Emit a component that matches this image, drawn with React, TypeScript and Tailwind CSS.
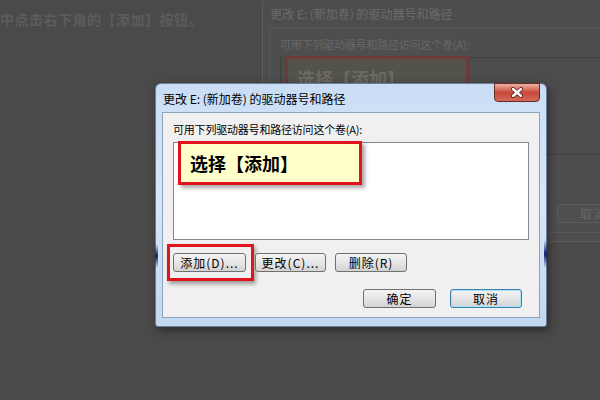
import React from "react";

type Tone = { dim?: boolean };

const Btn = ({ label, w, focus, dim }: { label: string; w: string; focus?: boolean } & Tone) => (
  <button
    className={`${w} h-[19px] shrink-0 rounded-[3px] border text-[12px] leading-none tracking-[1px] flex items-center justify-center ${
      dim
        ? "border-[#5c5c5c] bg-[#4f4f4f] text-[#676767]"
        : focus
        ? "border-[#3c7fb1] shadow-[inset_0_0_0_1px_#a6e2fb] bg-linear-to-b from-[#f4f4f4] via-[#e6e6e6] to-[#d3d3d3] text-black"
        : "border-[#707070] bg-linear-to-b from-[#f4f4f4] via-[#e6e6e6] to-[#d3d3d3] text-black"
    }`}
  >
    {label}
  </button>
);

const CloseIcon = () => (
  <svg width="14" height="11" viewBox="0 0 14 11">
    <path d="M3 2 L11 9 M11 2 L3 9" stroke="#5a1a14" strokeWidth="4" strokeLinecap="round" />
    <path d="M3 2 L11 9 M11 2 L3 9" stroke="#ffffff" strokeWidth="2.4" strokeLinecap="round" />
  </svg>
);

const Dialog = ({ dim }: Tone) => (
  <div
    className={`w-[392px] h-[244px] rounded-t-[6px] rounded-b-[3px] border flex flex-col px-[6px] pb-[8px] relative ${
      dim
        ? "border-[#5b5b5b] bg-[#4d4d4d]"
        : "border-[#6b7f99] bg-linear-to-b from-[#c9def5] via-[#d6e6f8] to-[#c2d8f0] shadow-[2px_3px_8px_rgba(0,0,0,0.45)]"
    }`}
  >
    {!dim && (
      <>
        <div className="absolute left-[-1px] top-[160px] w-[3px] h-[24px] bg-linear-to-b from-transparent via-[#14206a] to-transparent" />
        <div className="absolute right-[-1px] top-[156px] w-[3px] h-[28px] bg-linear-to-b from-transparent via-[#14206a] to-transparent" />
      </>
    )}

    <div className="h-[28px] flex items-center justify-between">
      <span className={`text-[12px] leading-none pl-px pt-[1px] ${dim ? "text-[#6b6b6b]" : "text-black"}`}>
        更改 E: (新加卷) 的驱动器号和路径
      </span>
      {!dim && (
        <div className="self-start mt-[-1px] w-[46px] h-[19px] rounded-b-[4px] border border-[#6d2a22] bg-linear-to-b from-[#eab0a4] via-[#c9483a] to-[#d26a5a] flex items-center justify-center">
          <CloseIcon />
        </div>
      )}
    </div>

    <div className={`flex-1 border px-[10px] pt-[9px] ${dim ? "border-[#575757] bg-[#4e4e4e]" : "border-[#8da2bc] bg-[#f0f0f0]"}`}>
      <p className={`text-[11px] leading-[14px] tracking-[-0.2px] ${dim ? "text-[#686868]" : "text-black"}`}>
        可用下列驱动器号和路径访问这个卷(A):
      </p>
      <div className={`mt-[6px] h-[98px] border ${dim ? "border-[#3f3f3f] bg-[#4c4c4c]" : "border-[#828790] bg-white"}`}>
        <div
          className={`mt-[-2px] ml-[4px] w-[184px] h-[44px] border-[3px] flex items-center pl-[9px] ${
            dim
              ? "border-[#6e3a3a] bg-[#54534a]"
              : "border-[#e0141a] bg-[#ffffcc] shadow-[3px_3px_4px_rgba(0,0,0,0.35)]"
          }`}
        >
          <span className={`text-[18px] font-bold leading-none ${dim ? "text-[#6a6a62]" : "text-black"}`}>选择【添加】</span>
        </div>
      </div>

      <div className="mt-[13px] flex items-start gap-[9px]">
        <div
          className={`ml-[-6px] mr-[-8px] my-[-9px] border-[3px] pl-[3px] pr-[5px] py-[6px] ${
            dim ? "border-[#6e3a3a]" : "border-[#e0141a] shadow-[2px_3px_4px_rgba(0,0,0,0.35)]"
          }`}
        >
          <Btn label="添加(D)..." w="w-[73px]" dim={dim} />
        </div>
        <Btn label="更改(C)..." w="w-[71px]" dim={dim} />
        <Btn label="删除(R)" w="w-[72px]" dim={dim} />
      </div>

      <div className="mt-[17px] flex justify-end gap-[14px] pr-[7px]">
        <Btn label="确定" w="w-[73px]" dim={dim} />
        <Btn label="取消" w="w-[72px]" focus dim={dim} />
      </div>
    </div>
  </div>
);

export default function App() {
  return (
    <div className="relative w-[600px] h-[400px] overflow-hidden bg-[#4a4a4a] font-['Noto_Sans_CJK_SC','Liberation_Sans',sans-serif]">
      <p className="pt-[9px] text-[14px] font-bold text-[#5c5c5c] tracking-[0.5px]">中点击右下角的【添加】按钮。</p>

      {/* dimmed window behind */}
      <div className="absolute left-[262px] top-[-2px]">
        <Dialog dim />
      </div>

      {/* active window */}
      <div className="absolute left-[155px] top-[83px]">
        <Dialog />
      </div>
    </div>
  );
}
